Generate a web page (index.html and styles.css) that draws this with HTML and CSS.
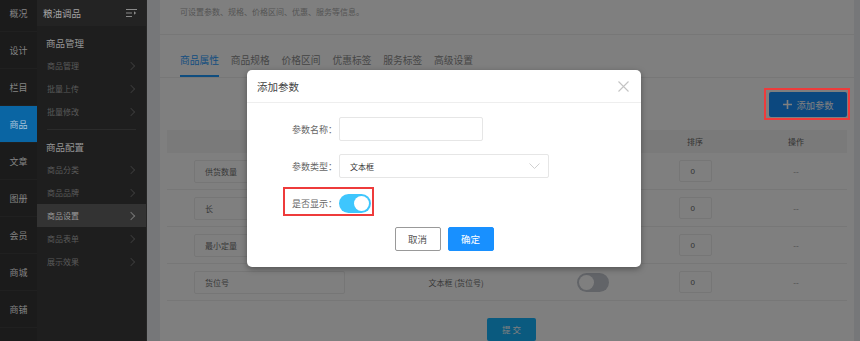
FILE: index.html
```html
<!DOCTYPE html>
<html lang="zh-CN">
<head>
    <meta charset="UTF-8">
    <title>商品设置</title>
    <link rel="stylesheet" href="styles.css">
</head>
<body>
    <div class="app">
        <aside class="nav-main">
            <ul class="nav-main-list">
                <li>概况</li>
                <li>设计</li>
                <li>栏目</li>
                <li class="active">商品</li>
                <li>文章</li>
                <li>图册</li>
                <li>会员</li>
                <li>商城</li>
                <li>商铺</li>
                <li></li>
            </ul>
        </aside>

        <aside class="nav-sub">
            <div class="nav-sub-head">
                <span>粮油调品</span>
                <svg class="collapse-icon" width="11" height="10" viewBox="0 0 11 10">
                    <path d="M0 1.5H11M0 5H6M0 8.5H6" stroke="#8a8a8a" stroke-width="1.2" fill="none"/>
                    <path d="M8 3.2L10.2 5L8 6.8Z" fill="#8a8a8a"/>
                </svg>
            </div>
            <div class="nav-group">
                <div class="nav-group-title">商品管理</div>
                <a class="nav-link">商品管理<i class="chev"></i></a>
                <a class="nav-link">批量上传<i class="chev"></i></a>
                <a class="nav-link">批量修改<i class="chev"></i></a>
            </div>
            <div class="nav-divider"></div>
            <div class="nav-group">
                <div class="nav-group-title">商品配置</div>
                <a class="nav-link">商品分类<i class="chev"></i></a>
                <a class="nav-link">商品品牌<i class="chev"></i></a>
                <a class="nav-link active">商品设置<i class="chev"></i></a>
                <a class="nav-link">商品表单<i class="chev"></i></a>
                <a class="nav-link">展示效果<i class="chev"></i></a>
            </div>
        </aside>

        <main class="content">
            <div class="panel">
                <div class="panel-desc">可设置参数、规格、价格区间、优惠、服务等信息。</div>

                <div class="tabs">
                    <span class="tab active">商品属性</span>
                    <span class="tab">商品规格</span>
                    <span class="tab">价格区间</span>
                    <span class="tab">优惠标签</span>
                    <span class="tab">服务标签</span>
                    <span class="tab">高级设置</span>
                </div>

                <div class="toolbar">
                    <button class="btn-add">
                        <svg width="9" height="9" viewBox="0 0 9 9">
                            <path d="M4.5 0V9M0 4.5H9" stroke="#fff" stroke-width="1.6"/>
                        </svg>
                        <span>添加参数</span>
                    </button>
                </div>

                <div class="param-table">
                    <div class="row head">
                        <div></div>
                        <div></div>
                        <div></div>
                        <div>排序</div>
                        <div>操作</div>
                    </div>
                    <div class="row">
                        <div class="cell-name"><span class="name-box">供货数量</span></div>
                        <div></div>
                        <div></div>
                        <div><span class="sort-box">0</span></div>
                        <div class="muted">--</div>
                    </div>
                    <div class="row">
                        <div class="cell-name"><span class="name-box">长</span></div>
                        <div></div>
                        <div></div>
                        <div><span class="sort-box">0</span></div>
                        <div class="muted">--</div>
                    </div>
                    <div class="row">
                        <div class="cell-name"><span class="name-box">最小定量</span></div>
                        <div></div>
                        <div></div>
                        <div><span class="sort-box">0</span></div>
                        <div class="muted">--</div>
                    </div>
                    <div class="row">
                        <div class="cell-name"><span class="name-box">货位号</span></div>
                        <div>文本框 (货位号)</div>
                        <div><span class="switch"></span></div>
                        <div><span class="sort-box">0</span></div>
                        <div class="muted">--</div>
                    </div>
                </div>

                <div class="submit-bar">
                    <button class="btn-submit">提 交</button>
                </div>
            </div>
        </main>

        <div class="dialog-box">
            <div class="dialog-head">
                <span>添加参数</span>
                <svg width="11" height="11" viewBox="0 0 11 11">
                    <path d="M0.5 0.5L10.5 10.5M10.5 0.5L0.5 10.5" stroke="#c4c4c4" stroke-width="1.1"/>
                </svg>
            </div>
            <div class="dialog-body">
                <div class="form-row">
                    <label class="form-label">参数名称：</label>
                    <div class="input"></div>
                </div>
                <div class="form-row">
                    <label class="form-label">参数类型：</label>
                    <div class="select">
                        <span>文本框</span>
                        <svg width="11" height="6" viewBox="0 0 11 6">
                            <path d="M0.5 0.5L5.5 5.5L10.5 0.5" stroke="#d0d0d0" stroke-width="1" fill="none"/>
                        </svg>
                    </div>
                </div>
                <div class="form-row last">
                    <label class="form-label">是否显示：</label>
                    <span class="switch on"></span>
                </div>
                <div class="dialog-foot">
                    <button class="btn btn-cancel">取消</button>
                    <button class="btn btn-ok">确定</button>
                </div>
            </div>
        </div>

        <div class="note note-add"></div>
        <div class="note note-show"></div>
    </div>
</body>
</html>
```

FILE: styles.css
```css
* {
    margin: 0;
    padding: 0;
    box-sizing: border-box;
}

body {
    font-family: "Noto Sans CJK SC", "Noto Sans", sans-serif;
    width: 860px;
    height: 341px;
    overflow: hidden;
    background: #1b1b1b;
}

button {
    font-family: inherit;
    cursor: pointer;
}

.app {
    display: flex;
    height: 341px;
    position: relative;
    overflow: hidden;
}

/* first nav column */
.nav-main {
    width: 37px;
    background: #1b1b1b;
    overflow: hidden;
}

.nav-main-list {
    list-style: none;
    margin-top: -5px;
}

.nav-main-list li {
    height: 37px;
    display: flex;
    align-items: center;
    justify-content: center;
    font-size: 9px;
    color: #858585;
    border-bottom: 1px solid #202020;
}

.nav-main-list li.active {
    background: #0a65a3;
    color: #aac6da;
}

/* second nav column */
.nav-sub {
    width: 110px;
    background: #1e1e1e;
    border-right: 1px solid #262626;
}

.nav-sub-head {
    height: 26px;
    background: #232323;
    display: flex;
    align-items: center;
    justify-content: space-between;
    padding: 0 9px 0 6px;
    font-size: 9.5px;
    color: #a2a2a2;
}

.nav-group {
    padding-top: 8px;
}

.nav-group-title {
    height: 18px;
    line-height: 18px;
    padding-left: 9px;
    margin-bottom: 2px;
    font-size: 9.5px;
    color: #969696;
}

.nav-link {
    display: flex;
    justify-content: space-between;
    align-items: center;
    height: 23px;
    padding: 0 12px 0 10px;
    font-size: 8px;
    color: #5a5a5a;
}

.nav-link.active {
    background: #333;
    color: #9a9a9a;
}

.chev {
    width: 6px;
    height: 6px;
    border-top: 1px solid #383838;
    border-right: 1px solid #383838;
    transform: rotate(45deg);
}

.nav-link.active .chev {
    border-color: #747474;
}

.nav-divider {
    height: 1px;
    margin: 6px 10px 0;
    background: #2b2b2b;
}

/* content behind the dialog */
.content {
    flex: 1;
    position: relative;
    background: #eceff3;
    padding: 0 6px 0 13px;
    overflow: hidden;
}

/* dark layer while the dialog is open */
.content::after {
    content: '';
    position: absolute;
    top: 0;
    left: 0;
    right: 0;
    bottom: 0;
    background: rgba(0, 0, 0, 0.5);
}

.panel {
    background: #fff;
    height: 100%;
}

.panel-desc {
    height: 35px;
    padding: 6px 20px 0;
    line-height: 12px;
    font-size: 8px;
    color: #aaa;
    border-bottom: 1px solid #eee;
}

.tabs {
    display: flex;
    gap: 11.8px;
    height: 43px;
    padding: 0 20px;
    border-bottom: 1px solid #eee;
}

.tab {
    height: 42px;
    padding-top: 18px;
    line-height: 14px;
    font-size: 9.75px;
    color: #8c8c8c;
    border-bottom: 2px solid transparent;
}

.tab.active {
    color: #2a9cff;
    border-bottom-color: #1e9aff;
}

.toolbar {
    display: flex;
    justify-content: flex-end;
    padding: 14px 7px 0;
}

.btn-add {
    width: 78px;
    height: 25px;
    display: flex;
    align-items: center;
    justify-content: center;
    gap: 5px;
    background: #1890ff;
    color: #fff;
    border: 0;
    border-radius: 2px;
    font-size: 9.25px;
}

.param-table {
    margin: 13px 7px 0;
}

.row {
    display: grid;
    grid-template-columns: 204px 170px 104px 100px 102px;
    align-items: center;
    height: 37px;
    border-bottom: 1px solid #efefef;
    font-size: 8px;
    color: #707070;
    text-align: center;
}

.row.head {
    height: 23px;
    background: #f4f4f4;
    border-bottom: 0;
    color: #666;
}

.row .muted {
    color: #949494;
}

.cell-name {
    text-align: left;
    padding-left: 27px;
}

.name-box {
    display: flex;
    align-items: center;
    width: 151px;
    height: 23px;
    padding-left: 10px;
    border: 1px solid #ececec;
    border-radius: 2px;
}

.sort-box {
    display: flex;
    align-items: center;
    width: 33px;
    height: 22px;
    margin: 0 auto;
    padding-left: 11px;
    border: 1px solid #ececec;
    border-radius: 2px;
    font-family: "Liberation Sans", sans-serif;
    color: #666;
}

.switch {
    display: inline-block;
    vertical-align: middle;
    width: 32px;
    height: 19px;
    border-radius: 10px;
    background: #c4c8d0;
    position: relative;
}

.switch::after {
    content: '';
    position: absolute;
    top: 2px;
    left: 2px;
    width: 15px;
    height: 15px;
    border-radius: 50%;
    background: #fff;
}

.switch.on {
    background: #3ec6fd;
}

.switch.on::after {
    left: auto;
    right: 2px;
}

.submit-bar {
    padding: 13px 0 0 9px;
    text-align: center;
}

.btn-submit {
    width: 49px;
    height: 23px;
    background: #14b4ff;
    color: #fff;
    border: 0;
    border-radius: 2px;
    font-size: 8.5px;
}

/* dialog */
.dialog-box {
    position: absolute;
    left: 247px;
    top: 70px;
    width: 394px;
    height: 197px;
    background: #fff;
    border-radius: 5px;
    box-shadow: 0 2px 6px rgba(0, 0, 0, 0.35);
    z-index: 10;
}

.dialog-head {
    height: 33px;
    display: flex;
    align-items: center;
    justify-content: space-between;
    padding: 0 12px 0 10px;
    border-bottom: 1px solid #eee;
    font-size: 10.5px;
    color: #444;
}

.dialog-body {
    padding-top: 14px;
}

.form-row {
    display: flex;
    align-items: center;
    height: 24px;
    margin-bottom: 13px;
}

.form-row.last {
    margin-bottom: 12px;
}

.form-label {
    width: 92px;
    padding-right: 2px;
    text-align: right;
    font-size: 9px;
    color: #666;
}

.input {
    width: 144px;
    height: 24px;
    border: 1px solid #e6e6e6;
    border-radius: 2px;
}

.select {
    width: 210px;
    height: 24px;
    display: flex;
    align-items: center;
    justify-content: space-between;
    padding: 0 8px 0 10px;
    border: 1px solid #e6e6e6;
    border-radius: 2px;
    font-size: 8px;
    color: #333;
}

.dialog-foot {
    display: flex;
    justify-content: center;
    gap: 7px;
}

.btn {
    width: 46px;
    height: 24px;
    border-radius: 2px;
    font-size: 9.5px;
}

.btn-cancel {
    background: #fff;
    border: 1px solid #999;
    color: #555;
}

.btn-ok {
    background: #1890ff;
    border: 1px solid #1890ff;
    color: #fff;
}

/* red annotation boxes */
.note {
    position: absolute;
    border: 2px solid #ee3b3b;
    z-index: 20;
}

.note-add {
    left: 764px;
    top: 88px;
    width: 86px;
    height: 32px;
}

.note-show {
    left: 283px;
    top: 187px;
    width: 91px;
    height: 29px;
}
```
